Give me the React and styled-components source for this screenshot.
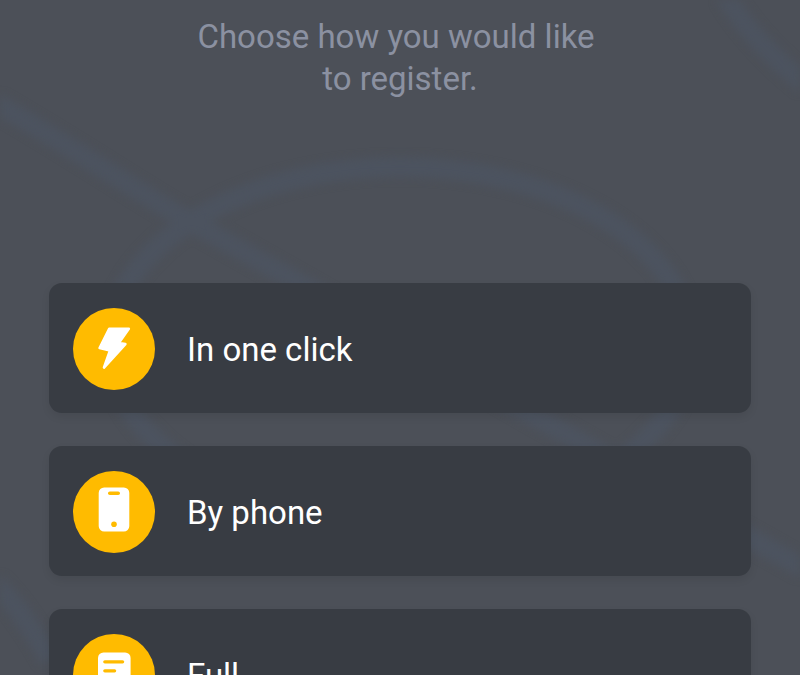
import React from 'react'
import styled, { createGlobalStyle } from 'styled-components'

const Global = createGlobalStyle`
    html, body {
        margin: 0;
        padding: 0;
        background: #4c5058;
    }
    #root {
        height: 675px;
    }
`

const Page = styled.div`
    position: relative;
    width: 800px;
    height: 675px;
    overflow: hidden;
    background: #4c5058;
    font-family: Roboto, sans-serif;
`

const Waves = styled.svg`
    position: absolute;
    top: 0;
    left: 0;
    filter: blur(4px);
`

const Content = styled.div`
    position: relative;
    display: flex;
    flex-direction: column;
    padding: 16px 49px 0;
`

const Title = styled.h1`
    margin: 0 0 183px;
    font-size: 33px;
    line-height: 42px;
    font-weight: 400;
    text-align: center;
    color: #8b91a1;
`

const FirstLine = styled.span`
    display: block;
    padding-right: 8px;
`

const List = styled.div`
    display: flex;
    flex-direction: column;
    gap: 33px;
`

const Card = styled.div`
    display: flex;
    align-items: center;
    gap: 32px;
    height: 130px;
    flex-shrink: 0;
    padding: 1px 24px 0;
    box-sizing: border-box;
    border-radius: 13px;
    background: #383c43;
    box-shadow: 0 4px 8px rgba(0, 0, 0, 0.08);
`

const Badge = styled.div`
    display: flex;
    align-items: center;
    justify-content: center;
    width: 82px;
    height: 82px;
    flex-shrink: 0;
    border-radius: 50%;
    background: #ffbb00;
`

const Label = styled.span`
    padding-top: 2px;
    font-size: 33px;
    color: #ffffff;
`

const Bolt = () => (
    <svg width="82" height="82" viewBox="0 0 82 82">
        <path
            d="M36.2 20.8 H55.8 L45.8 35 L52.4 36 L31 59.5 L37 42.5 L26.6 40 Z"
            fill="#fff"
            stroke="#fff"
            strokeWidth="2.6"
            strokeLinejoin="round"
        />
    </svg>
)

const Phone = () => (
    <svg width="82" height="82" viewBox="0 0 82 82">
        <rect x="25.7" y="16.5" width="30.6" height="44" rx="5.5" fill="#fff" />
        <rect x="35" y="20.5" width="12" height="3.6" rx="1.8" fill="#ffbb00" />
        <circle cx="41" cy="53.3" r="2.8" fill="#ffbb00" />
    </svg>
)

const Doc = () => (
    <svg width="82" height="82" viewBox="0 0 82 82">
        <rect x="25" y="18.5" width="32.6" height="44" rx="5.5" fill="#fff" />
        <rect x="30.2" y="26.2" width="21" height="3.2" rx="1.6" fill="#ffbb00" />
        <rect x="30.2" y="35.2" width="13" height="3.2" rx="1.6" fill="#ffbb00" />
        <rect x="30.2" y="44.2" width="17" height="3.2" rx="1.6" fill="#ffbb00" />
    </svg>
)

const options = [
    { label: 'In one click', icon: <Bolt /> },
    { label: 'By phone', icon: <Phone /> },
    { label: 'Full', icon: <Doc /> },
]

export default function App() {
    return (
        <Page>
            <Global />
            <Waves width="800" height="675" viewBox="0 0 800 675" fill="none" stroke="#4c535f" strokeWidth="20">
                <ellipse cx="400" cy="345" rx="290" ry="178" />
                <path d="M-10 100 C 60 140 120 180 170 210 L 810 572" />
                <path d="M722 -10 C 745 30 775 60 810 88" />
                <path d="M-10 580 C 10 595 30 625 50 660" />
            </Waves>
            <Content>
                <Title>
                    <FirstLine>Choose how you would like</FirstLine>
                    to register.
                </Title>
                <List>
                    {options.map((o) => (
                        <Card key={o.label}>
                            <Badge>{o.icon}</Badge>
                            <Label>{o.label}</Label>
                        </Card>
                    ))}
                </List>
            </Content>
        </Page>
    )
}
